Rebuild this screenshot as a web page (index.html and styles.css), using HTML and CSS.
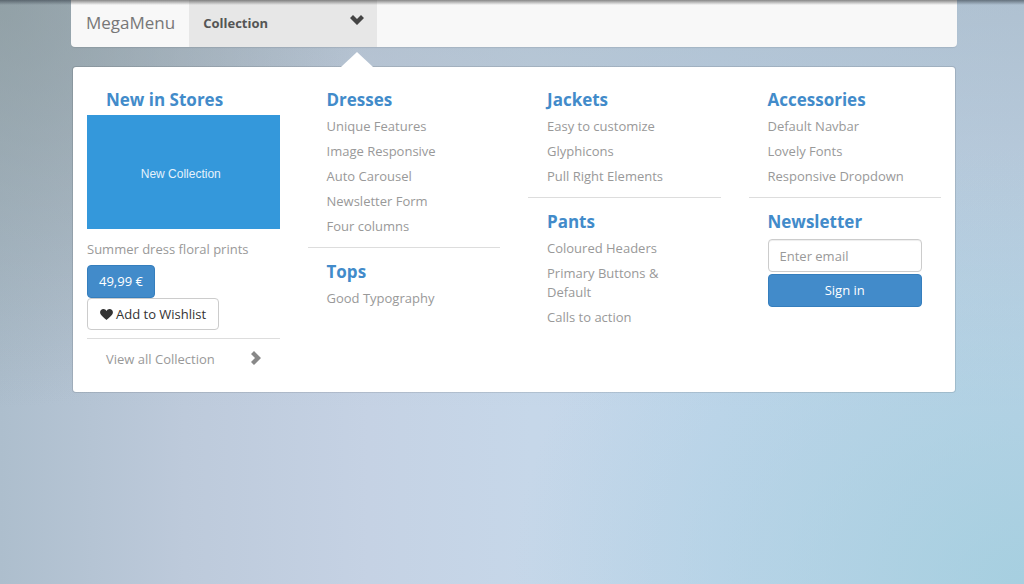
FILE: index.html
```html
<!DOCTYPE html>
<html lang="en">
<head>
<meta charset="UTF-8">
<meta name="viewport" content="width=device-width, initial-scale=1">
<title>MegaMenu</title>
<link rel="stylesheet" href="styles.css">
</head>
<body>
	<div class="container">
		<nav class="navbar">
			<a class="brand" href="#">MegaMenu</a>
			<button type="button" class="toggle" aria-expanded="true">
				Collection
				<svg class="chevron-down" viewBox="0 0 14 10"><path d="M0 3 3 0l4 4 4-4 3 3-7 7z"/></svg>
			</button>
		</nav>
		<div class="mega">
			<div class="col">
				<h3>New in Stores</h3>
				<a class="banner" href="#">New Collection</a>
				<h4>Summer dress floral prints</h4>
				<button type="button" class="btn primary">49,99 €</button>
				<button type="button" class="btn">
					<svg class="heart" viewBox="0 0 14 12"><path d="M7 12C5 10 0 7 0 3.600C0 1.500 1.600 0 3.600 0 5.200 0 6.400.9 7 2.100 7.600.9 8.800 0 10.400 0 12.400 0 14 1.500 14 3.600 14 7 9 10 7 12z"/></svg>
					Add to Wishlist
				</button>
				<hr class="close">
				<a class="view-all" href="#">
					View all Collection
					<svg class="chevron-right" viewBox="0 0 10 14"><path d="M3 0 0 3l4 4-4 4 3 3 7-7z"/></svg>
				</a>
			</div>
			<div class="col">
				<h3>Dresses</h3>
				<ul>
					<li><a href="#">Unique Features</a></li>
					<li><a href="#">Image Responsive</a></li>
					<li><a href="#">Auto Carousel</a></li>
					<li><a href="#">Newsletter Form</a></li>
					<li><a href="#">Four columns</a></li>
				</ul>
				<hr>
				<h3>Tops</h3>
				<ul>
					<li><a href="#">Good Typography</a></li>
				</ul>
			</div>
			<div class="col">
				<h3>Jackets</h3>
				<ul>
					<li><a href="#">Easy to customize</a></li>
					<li><a href="#">Glyphicons</a></li>
					<li><a href="#">Pull Right Elements</a></li>
				</ul>
				<hr>
				<h3>Pants</h3>
				<ul>
					<li><a href="#">Coloured Headers</a></li>
					<li><a href="#">Primary Buttons &amp; Default</a></li>
					<li><a href="#">Calls to action</a></li>
				</ul>
			</div>
			<div class="col">
				<h3>Accessories</h3>
				<ul>
					<li><a href="#">Default Navbar</a></li>
					<li><a href="#">Lovely Fonts</a></li>
					<li><a href="#">Responsive Dropdown</a></li>
				</ul>
				<hr>
				<h3>Newsletter</h3>
				<form class="newsletter">
					<input type="email" aria-label="Email address" placeholder="Enter email">
					<button type="submit" class="btn primary">Sign in</button>
				</form>
			</div>
		</div>
	</div>
</body>
</html>
```
FILE: styles.css
```css
*{box-sizing: border-box;}
html{min-height: 100%;}
body{
	margin: 0;
	min-height: 100vh;
	font-family: "Open Sans", "Noto Sans", sans-serif;
	font-size: 13px;
	line-height: 19px;
	color: #999;
	background:
		linear-gradient(rgba(60,70,80,.65), rgba(60,70,80,0) 5px),
		radial-gradient(ellipse 35% 70% at 0 0, rgba(136,150,152,.65), rgba(147,161,168,0)),
		radial-gradient(ellipse 50% 75% at 100% 100%, rgba(160,206,222,.8), rgba(166,208,226,0)),
		linear-gradient(rgba(150,165,175,.4), rgba(160,175,185,0) 70%),
		linear-gradient(90deg, #adbecd, #bdcadb 18%, #c5d2e4 36%, #c6d7e9 52%, #c2d6eb 70%, #c0d4e8);
}
a{color: inherit;text-decoration: none;}
button,input{font: inherit;}
svg{fill: currentColor;}
.container{
	padding: 0 67px 0 71px;
}

/* navbar */
.navbar{
	display: flex;
	height: 47px;
	background: linear-gradient(rgba(60,60,60,.6), rgba(120,120,120,0) 5px), #f8f8f8;
	border-radius: 0 0 4px 4px;
	box-shadow: 0 1px 1px rgba(0,0,0,.08);
}
.brand{
	display: flex;
	align-items: center;
	padding: 0 14px 2px 15px;
	font-size: 17px;
	color: #777;
}
.toggle{
	position: relative;
	display: flex;
	align-items: center;
	justify-content: space-between;
	width: 188px;
	padding: 0 13px 1px 14px;
	border: 0;
	font-weight: 700;
	color: #555;
	background: linear-gradient(rgba(60,60,60,.6), rgba(120,120,120,0) 5px), #e7e7e7;
}
/* arrow that points from the menu up to the toggle */
.toggle::after{
	content: "";
	position: absolute;
	top: 52px;
	right: 4px;
	border: 16px solid transparent;
	border-top: 0;
	border-bottom: 15px solid #fff;
}
.chevron-down{
	width: 14px;
	height: 10px;
	margin-bottom: 6px;
	color: #444;
}

/* dropdown */
.mega{
	display: grid;
	grid-template-columns: repeat(4, 1fr);
	column-gap: 28px;
	margin: 19px 1px 0;
	padding: 21px 14px 20px;
	background: #fff;
	border: 1px solid rgba(0,0,0,.1);
	border-radius: 4px;
	background-clip: padding-box;
}
h3{
	margin: 0 19px 2px;
	font-size: 17px;
	line-height: 24px;
	font-weight: 700;
	color: #428bca;
}
h4{
	margin: 11px 0 6px;
	font-size: 13px;
	line-height: 19px;
	font-weight: 400;
}
ul{
	margin: 0;
	padding: 0 19px;
	list-style: none;
}
li{padding: 3px 0;}
hr{
	margin: 8px 0 12px;
	border: 0;
	border-top: 1px solid #ddd;
}
.close{margin-bottom: 8px;}
.banner{
	display: flex;
	align-items: center;
	justify-content: center;
	height: 114px;
	margin-top: 3px;
	padding: 4px 5px 0 0;
	font-family: "Liberation Sans", Arial, sans-serif;
	font-size: 12px;
	color: #e4f2fc;
	background: #3498db;
}
.btn{
	display: flex;
	align-items: center;
	justify-content: center;
	gap: 3px;
	height: 32px;
	padding: 0 12px;
	color: #333;
	background: #fff;
	border: 1px solid #ccc;
	border-radius: 4px;
}
.primary{
	height: 33px;
	padding: 0 11px;
	color: #fff;
	background: #428bca;
	border-color: #357ebd;
}
.heart{
	width: 13px;
	height: 11px;
}
.view-all{
	display: flex;
	align-items: center;
	justify-content: space-between;
	padding: 3px 19px;
}
.chevron-right{
	width: 10px;
	height: 14px;
	margin-bottom: 4px;
	color: #888;
}
.newsletter{
	display: grid;
	gap: 2px;
	padding: 3px 19px 0;
}
.newsletter input{
	width: 100%;
	height: 33px;
	padding: 0 11px;
	border: 1px solid #ccc;
	border-radius: 4px;
	box-shadow: inset 0 1px 1px rgba(0,0,0,.07);
}
.newsletter input::placeholder{color: #999;}
```
